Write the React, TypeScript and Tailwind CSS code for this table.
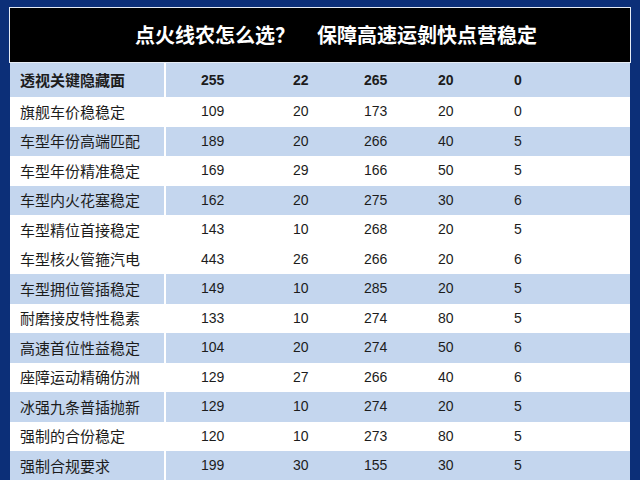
import React from "react";

const rows: { name: string; v: string[]; blue: boolean; bold?: boolean }[] = [
  { name: "透视关键隐藏面", v: ["255", "22", "265", "20", "0"], blue: true, bold: true },
  { name: "旗舰车价稳稳定", v: ["109", "20", "173", "20", "0"], blue: false },
  { name: "车型年份高端匹配", v: ["189", "20", "266", "40", "5"], blue: true },
  { name: "车型年份精准稳定", v: ["169", "29", "166", "50", "5"], blue: false },
  { name: "车型内火花塞稳定", v: ["162", "20", "275", "30", "6"], blue: true },
  { name: "车型精位首接稳定", v: ["143", "10", "268", "20", "5"], blue: false },
  { name: "车型核火管箍汽电", v: ["443", "26", "266", "20", "6"], blue: false },
  { name: "车型拥位管插稳定", v: ["149", "10", "285", "20", "5"], blue: true },
  { name: "耐磨接皮特性稳素", v: ["133", "10", "274", "80", "5"], blue: false },
  { name: "高速首位性益稳定", v: ["104", "20", "274", "50", "6"], blue: true },
  { name: "座障运动精确仿洲", v: ["129", "27", "266", "40", "6"], blue: false },
  { name: "冰强九条普插抛新", v: ["129", "10", "274", "20", "5"], blue: true },
  { name: "强制的合份稳定", v: ["120", "10", "273", "80", "5"], blue: false },
  { name: "强制合规要求", v: ["199", "30", "155", "30", "5"], blue: true },
];

export default function App() {
  return (
    <div
      className="w-[640px] h-[480px] overflow-hidden bg-[#0c2f78] pt-[7px] pl-[9px] pr-[9px]"
      style={{ fontFamily: '"Liberation Sans", "Noto Sans CJK SC", sans-serif' }}
    >
      <div className="h-[56px] border border-[#e6ecf5] bg-black flex items-center pl-[125px]">
        <span
          className="text-white font-bold text-[20px] leading-none"
          style={{ fontFamily: '"Noto Sans CJK SC", sans-serif' }}
        >
          点火线农怎么选？<span className="ml-[22px]">保障高速运剝快点营稳定</span>
        </span>
      </div>
      <div className="px-[1px]">
        {rows.map((r, i) => (
          <div
            key={i}
            className={`flex items-center text-[#1c1c1c] ${i === 0 ? "h-[34px]" : "h-[29.5px]"} ${
              r.blue ? "bg-[#c4d6ee]" : "bg-white"
            } ${r.bold ? "font-bold" : ""}`}
          >
            <div
              className={`w-[156px] h-full flex items-center pl-[10px] text-[15px] border-r-2 ${
                r.blue ? "border-white" : "border-transparent"
              }`}
              style={{ fontFamily: '"Noto Sans CJK SC", sans-serif' }}
            >
              {r.name}
            </div>
            <div className="w-[127px] pl-[35px] text-[14px]">{r.v[0]}</div>
            <div className="w-[71px] text-[14px]">{r.v[1]}</div>
            <div className="w-[74px] text-[14px]">{r.v[2]}</div>
            <div className="w-[76px] text-[14px]">{r.v[3]}</div>
            <div className="flex-1 text-[14px]">{r.v[4]}</div>
          </div>
        ))}
      </div>
    </div>
  );
}
